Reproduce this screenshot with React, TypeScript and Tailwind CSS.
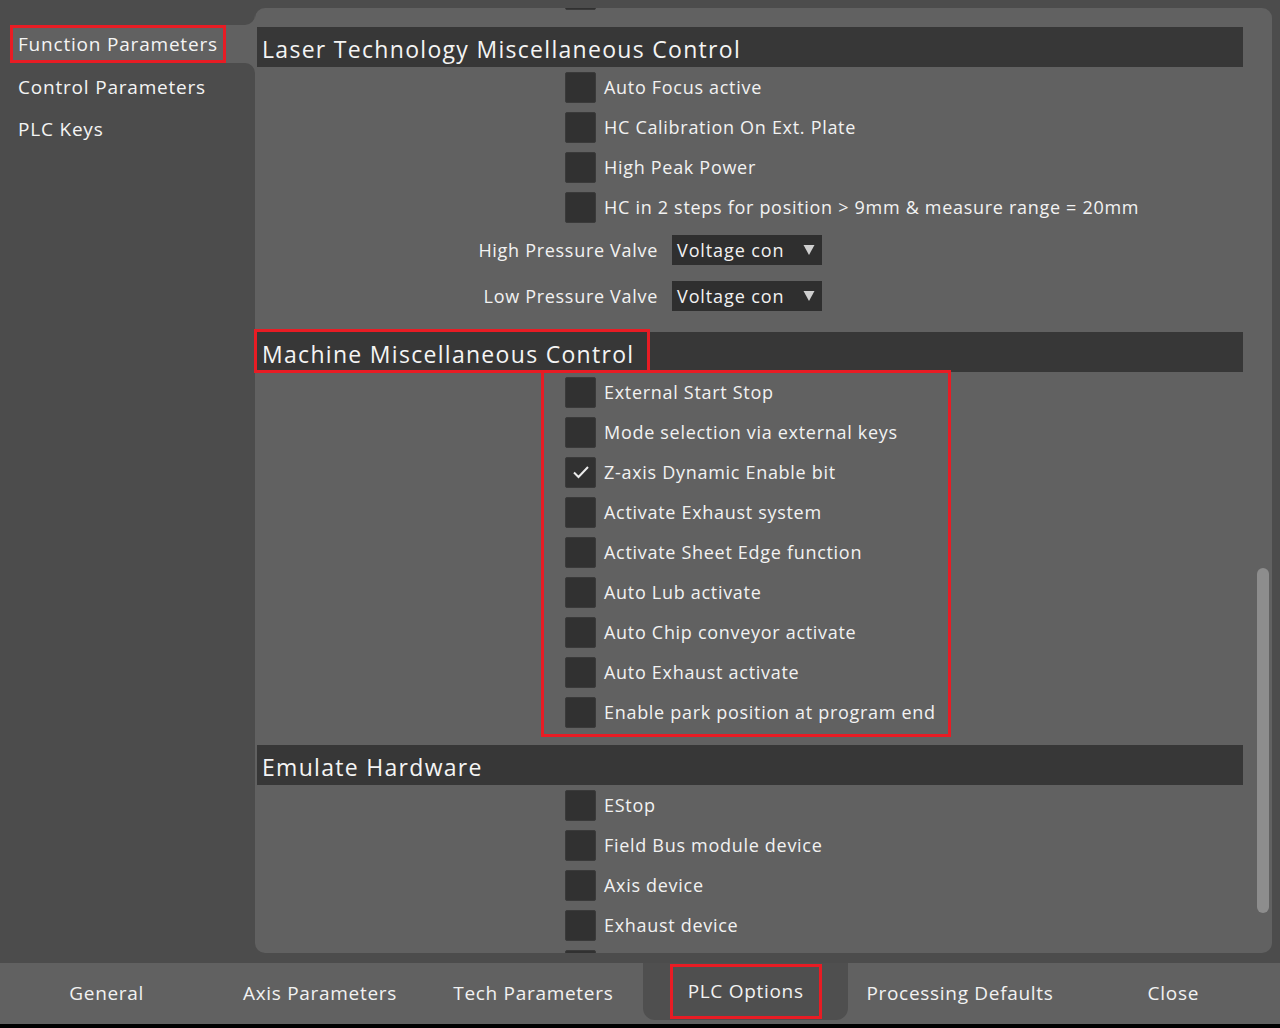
import React from "react";

const FONT = "font-['Open_Sans',sans-serif]";

const Check = ({ checked }: { checked?: boolean }) => (
  <div className="w-[31px] h-[31px] shrink-0 rounded-[2px] bg-[#313131] border border-[#3a3a3a] flex items-center justify-center">
    {checked && (
      <svg width="18" height="14" viewBox="0 0 18 14">
        <path d="M2 7.5 L6.5 12 L16 2" stroke="#ececec" strokeWidth="2" fill="none" />
      </svg>
    )}
  </div>
);

const Row = ({ label, checked }: { label: string; checked?: boolean }) => (
  <div className="h-[40px] shrink-0 flex items-center pl-[310px] gap-[8px]">
    <Check checked={checked} />
    <span className="text-[18px] tracking-[0.7px] text-[#f2f2f2] whitespace-nowrap">{label}</span>
  </div>
);

const Header = ({ title }: { title: string }) => (
  <div className="mt-[13px] ml-[2px] h-[40px] shrink-0 bg-[#373737] flex items-center pl-[5px] pt-[5px] text-[23px] tracking-[1.3px] text-[#f4f4f4] whitespace-nowrap">
    {title}
  </div>
);

const Select = ({ label }: { label: string }) => (
  <div className="h-[46px] shrink-0 flex items-center">
    <div className="w-[417px] pr-[14px] text-right text-[18px] tracking-[0.7px] text-[#f2f2f2] whitespace-nowrap">{label}</div>
    <div className="w-[150px] h-[30px] bg-[#2f2f2f] flex items-center pl-[5px] pr-[7px]">
      <span className="flex-1 whitespace-nowrap text-[18px] tracking-[0.9px] text-[#f2f2f2]">Voltage con</span>
      <svg width="12" height="12" viewBox="0 0 12 12" className="shrink-0">
        <path d="M0.5 1 L11.5 1 L6 11 Z" fill="#cfcfcf" />
      </svg>
    </div>
  </div>
);

const tabs = ["General", "Axis Parameters", "Tech Parameters", "PLC Options", "Processing Defaults", "Close"];

export default function App() {
  return (
    <div className={`relative w-[1280px] h-[1028px] bg-black ${FONT}`}>
      <div className="h-[963px] flex bg-[#4c4c4c]">
        {/* sidebar */}
        <div className="w-[255px] shrink-0 flex flex-col bg-[#616161]">
          <div className="h-[25px] bg-[#4c4c4c] rounded-br-[10px]" />
          <div className="h-[38px] flex">
            <div className="w-[10px] bg-[#4c4c4c]" />
            <div className="w-[216px] h-[38px] border-[3px] border-[#e81c24] flex items-center pl-[5px] text-[19px] tracking-[0.8px] text-[#f4f4f4] whitespace-nowrap">
              Function Parameters
            </div>
          </div>
          <div className="flex-1 bg-[#4c4c4c] rounded-tr-[10px] pt-[3px] flex flex-col">
            <div className="h-[42px] flex items-center pl-[18px] text-[19px] tracking-[0.8px] text-[#f4f4f4]">Control Parameters</div>
            <div className="h-[42px] flex items-center pl-[18px] text-[19px] tracking-[0.8px] text-[#f4f4f4]">PLC Keys</div>
          </div>
        </div>

        {/* panel */}
        <div className="flex-1 pt-[8px] pr-[8px] pb-[10px] flex">
          <div className="flex-1 bg-[#616161] rounded-[10px] overflow-hidden flex">
            <div className="flex-1 flex flex-col mt-[-34px]">
              <Row label="" />
              <Header title="Laser Technology Miscellaneous Control" />
              <Row label="Auto Focus active" />
              <Row label="HC Calibration On Ext. Plate" />
              <Row label="High Peak Power" />
              <Row label="HC in 2 steps for position > 9mm & measure range = 20mm" />
              <Select label="High Pressure Valve" />
              <Select label="Low Pressure Valve" />
              <Header title="Machine Miscellaneous Control" />
              <Row label="External Start Stop" />
              <Row label="Mode selection via external keys" />
              <Row label="Z-axis Dynamic Enable bit" checked />
              <Row label="Activate Exhaust system" />
              <Row label="Activate Sheet Edge function" />
              <Row label="Auto Lub activate" />
              <Row label="Auto Chip conveyor activate" />
              <Row label="Auto Exhaust activate" />
              <Row label="Enable park position at program end" />
              <Header title="Emulate Hardware" />
              <Row label="EStop" />
              <Row label="Field Bus module device" />
              <Row label="Axis device" />
              <Row label="Exhaust device" />
              <Row label="" />
            </div>
            <div className="w-[29px] shrink-0 pt-[560px] pl-[14px]">
              <div className="w-[12px] h-[345px] rounded-full bg-[#8d8d8d]" />
            </div>
          </div>
        </div>
      </div>

      {/* bottom tabs */}
      <div className="h-[61px] bg-[#616161] grid grid-cols-6">
        {tabs.map((t) =>
          t === "PLC Options" ? (
            <div key={t} className="flex justify-center">
              <div className="ml-[3px] mr-[5px] flex-1 h-[57px] bg-[#4f4f4f] rounded-b-[12px] flex justify-center">
                <div className="mt-[1px] w-[152px] h-[55px] border-[3px] border-[#e81c24] flex items-center justify-center text-[19px] tracking-[0.7px] text-[#f2f2f2]">
                  {t}
                </div>
              </div>
            </div>
          ) : (
            <div key={t} className="flex items-center justify-center text-[19px] tracking-[0.7px] text-[#f2f2f2] whitespace-nowrap">
              {t}
            </div>
          )
        )}
      </div>

      {/* annotation boxes */}
      <div className="absolute left-[254px] top-[329px] w-[396px] h-[44px] border-[3px] border-[#e81c24] pointer-events-none" />
      <div className="absolute left-[541px] top-[370px] w-[410px] h-[367px] border-[3px] border-[#e81c24] pointer-events-none" />
    </div>
  );
}
